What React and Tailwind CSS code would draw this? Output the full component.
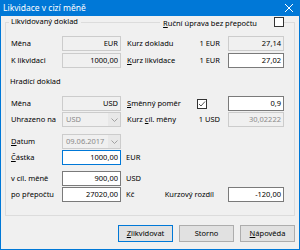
import React from 'react';

const fieldStyles = {
  ro: 'bg-[#f0f0f0] border-[#cccccc] text-black',
  rw: 'bg-white border-[#7a7a7a] text-black',
  focus: 'bg-white border-[#0078d7] text-black',
  dis: 'bg-[#f0f0f0] border-[#cccccc] text-[#8a8a8a]',
};

const Field = ({ value, variant = 'ro', className = '' }) => (
  <div
    className={`h-[15px] shrink-0 border flex items-center justify-end pr-[2px] leading-none ${fieldStyles[variant]} ${className}`}
  >
    {value}
  </div>
);

const Combo = ({ value }) => (
  <div className="h-[15px] w-[59px] shrink-0 border border-[#cccccc] bg-[#f0f0f0] flex items-center leading-none">
    <span className="flex-1 pl-[3px] text-[#8a8a8a]">{value}</span>
    <div className="w-[12px] h-full bg-[#e8e8e8] flex items-center justify-center">
      <svg width="7" height="4" viewBox="0 0 7 4">
        <path d="M0.5 0.5 L3.5 3.5 L6.5 0.5" fill="none" stroke="#a0a0a0" strokeWidth="1" />
      </svg>
    </div>
  </div>
);

const Check = ({ checked }) => (
  <div className="w-[10px] h-[10px] shrink-0 border border-[#333333] bg-white flex items-center justify-center">
    {checked && (
      <svg width="8" height="8" viewBox="0 0 8 8">
        <path d="M1 4 L3 6 L7 1.5" fill="none" stroke="#555555" strokeWidth="1" />
      </svg>
    )}
  </div>
);

const Label = ({ children }) => <div className="w-[53px] shrink-0 pl-[2px] whitespace-nowrap">{children}</div>;
const RLabel = ({ children }) => <div className="w-[70px] shrink-0 whitespace-nowrap">{children}</div>;
const Unit = ({ children }) => <div className="w-[31px] shrink-0 pr-[8px] text-right whitespace-nowrap">{children}</div>;

const Button = ({ children, primary }) => (
  <button
    className={`w-[55px] h-[17px] border bg-[#e1e1e1] leading-none ${
      primary ? 'border-[#0078d7]' : 'border-[#adadad]'
    }`}
  >
    {children}
  </button>
);

export default function App() {
  return (
    <div className="w-[300px] h-[250px] bg-[#f0f0f0] border-x border-b border-[#0078d7] flex flex-col font-['Noto_Sans',sans-serif] text-[7.5px] text-black">
      {/* title bar */}
      <div className="h-[16px] bg-[#0078d7] flex items-center justify-between pl-[2px] pr-[5px] text-white text-[8.5px]">
        <span>Likvidace v cizí měně</span>
        <svg width="10" height="10" viewBox="0 0 10 10">
          <path d="M1 1 L9 9 M9 1 L1 9" stroke="white" strokeWidth="1" />
        </svg>
      </div>

      <div className="px-[4px] flex flex-col">
        <fieldset className="min-w-0 border border-[#dcdcdc] pl-[3px] pr-[10px] pb-[13px]">
          <legend className="w-full h-[12px] flex items-center">
            <span className="pl-[2px] pr-[2px] whitespace-nowrap">Likvidovaný doklad</span>
            <div className="flex-1 h-px bg-[#dcdcdc] mx-[1px]" />
            <span className="pl-[2px] whitespace-nowrap mt-[3px]">
              <span className="underline">R</span>uční úprava bez přepočtu
            </span>
            <div className="w-[17px] h-px" />
            <Check />
          </legend>

          {/* Likvidovaný doklad */}
          <div className="mt-[8px] h-[15px] flex items-center">
            <Label>Měna</Label>
            <Field value="EUR" className="w-[59px]" />
            <div className="w-[6px] shrink-0" />
            <RLabel>Kurz dokladu</RLabel>
            <Unit>1 EUR</Unit>
            <Field value="27,14" className="w-[56px]" />
          </div>
          <div className="mt-[2px] h-[15px] flex items-center">
            <Label>K likvidaci</Label>
            <Field value="1000,00" className="w-[59px]" />
            <div className="w-[6px] shrink-0" />
            <RLabel>
              <span className="underline">K</span>urz likvidace
            </RLabel>
            <Unit>1 EUR</Unit>
            <Field value="27,02" variant="rw" className="w-[56px]" />
          </div>

          {/* Hradící doklad */}
          <div className="mt-[8px] h-[12px] flex items-center pl-[1px]">Hradící doklad</div>
          <div className="mt-[8px] h-[15px] flex items-center">
            <Label>Měna</Label>
            <Field value="USD" className="w-[59px]" />
            <div className="w-[6px] shrink-0" />
            <RLabel>
              <span className="underline">S</span>měnný poměr
            </RLabel>
            <div className="w-[31px] shrink-0">
              <Check checked />
            </div>
            <Field value="0,9" variant="rw" className="w-[56px]" />
          </div>
          <div className="mt-[1px] h-[15px] flex items-center">
            <Label>Uhrazeno na</Label>
            <Combo value="USD" />
            <div className="w-[6px] shrink-0" />
            <RLabel>
              Kurz <span className="underline">c</span>íl. měny
            </RLabel>
            <Unit>1 USD</Unit>
            <Field value="30,02222" variant="dis" className="w-[56px]" />
          </div>
          <div className="mt-[7px] h-[15px] flex items-center">
            <Label>
              <span className="underline">D</span>atum
            </Label>
            <Combo value="09.06.2017" />
          </div>
          <div className="mt-[1px] h-[15px] flex items-center">
            <Label>
              <span className="underline">Č</span>ástka
            </Label>
            <Field value="1000,00" variant="focus" className="w-[59px]" />
            <span className="ml-[5px]">EUR</span>
          </div>
          <div className="mt-[6px] h-[15px] flex items-center">
            <Label>v cíl. měně</Label>
            <Field value="900,00" variant="rw" className="w-[59px]" />
            <span className="ml-[5px]">USD</span>
          </div>
          <div className="mt-[1px] h-[15px] flex items-center">
            <Label>po přepočtu</Label>
            <Field value="27020,00" variant="rw" className="w-[59px]" />
            <span className="ml-[5px] flex-1">Kč</span>
            <div className="text-right pr-[14px] whitespace-nowrap">Kurzový rozdíl</div>
            <Field value="-120,00" variant="rw" className="w-[56px]" />
          </div>
        </fieldset>

        <div className="mt-[9px] flex justify-end gap-[6px]">
          <Button primary>
            <span className="underline">Z</span>likvidovat
          </Button>
          <Button>Storno</Button>
          <Button>
            <span className="underline">N</span>ápověda
          </Button>
        </div>
      </div>
    </div>
  );
}
